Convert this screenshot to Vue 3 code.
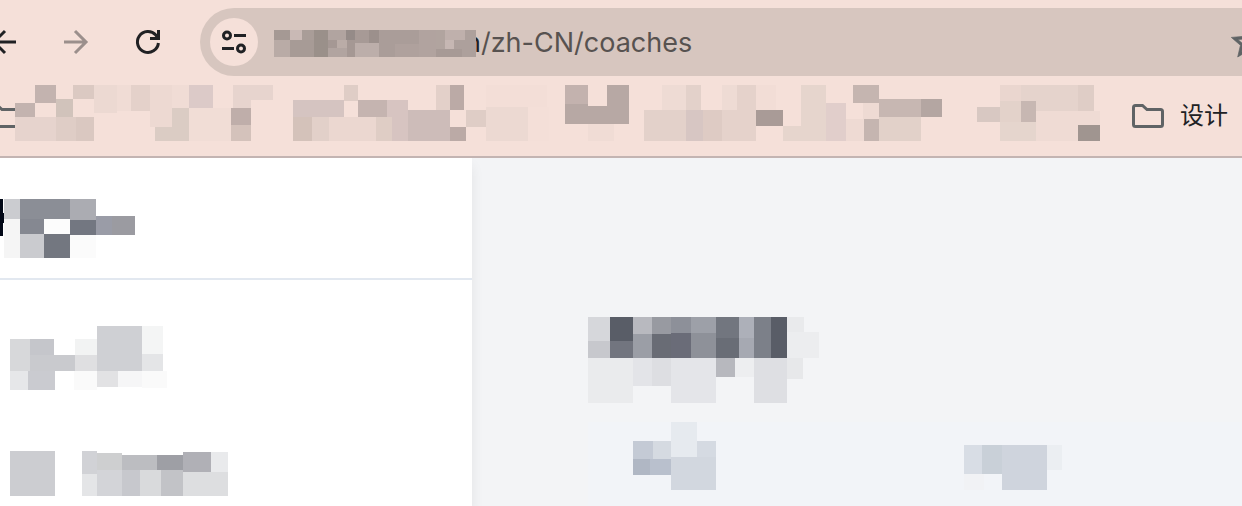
<script setup>
import { h } from 'vue'

// A block of redacted content: each cell is [x, y, width, height, colour].
const Mosaic = ({ w, t, cells }) =>
  h(
    'svg',
    { width: w, height: t, viewBox: `0 0 ${w} ${t}`, 'aria-hidden': 'true', 'shape-rendering': 'crispEdges' },
    cells.map(([x, y, width, height, fill]) => h('rect', { x, y, width, height, fill }))
  )
Mosaic.props = ['w', 't', 'cells']

const host = [
  [0, 0, 202, 27, '#ada09c'],
  [0, 0, 16, 10, '#a59994'], [16, 0, 12, 10, '#c9b9b5'], [28, 0, 12, 10, '#a99d98'],
  [0, 10, 16, 17, '#b9aba6'], [16, 10, 24, 17, '#a79b96'], [40, 0, 14, 27, '#9a908a'],
  [54, 0, 18, 10, '#b1a4a0'], [72, 0, 9, 10, '#958b88'], [81, 0, 14, 13, '#a79a96'],
  [95, 0, 10, 13, '#9c908c'], [54, 10, 9, 8, '#a59894'], [63, 10, 10, 8, '#baaca7'],
  [54, 18, 19, 9, '#b1a4a0'], [73, 10, 8, 17, '#a59894'], [81, 13, 24, 14, '#bcaeaa'],
  [105, 0, 40, 27, '#aa9d99'], [121, 14, 24, 13, '#afa19d'], [145, 0, 17, 27, '#b1a39f'],
  [162, 0, 9, 27, '#b1a49f'], [171, 0, 20, 10, '#bfb0ac'], [171, 10, 9, 9, '#c6b7b3'],
  [162, 19, 26, 8, '#a79a96']
]

const bookmarks = [
  [20, 0, 21, 18, '#c3b3af'], [0, 18, 20, 14, '#c3b3af'], [41, 14, 17, 18, '#d1c3bb'],
  [58, 0, 21, 14, '#dbc9c2'], [79, 0, 23, 28, '#ecd9d2'], [102, 0, 14, 26, '#f0dcd5'],
  [116, 0, 19, 26, '#e4d1ca'], [157, 0, 17, 23, '#f0dcd5'], [174, 0, 24, 23, '#dccac8'],
  [0, 32, 41, 24, '#e6d3cd'], [41, 32, 20, 24, '#dfcdc6'], [61, 32, 18, 24, '#dac8c1'],
  [140, 42, 34, 14, '#dbccc4'], [157, 23, 17, 33, '#dbccc4'], [135, 0, 22, 42, '#edd9d2'],
  [174, 23, 42, 33, '#f1ddd6'], [218, 0, 40, 15, '#e7d4ce'], [218, 15, 18, 8, '#e7d4ce'],
  [216, 23, 20, 17, '#bfaeaa'], [216, 40, 20, 16, '#d4c2bb'],
  [278, 15, 51, 17, '#d5c4c1'], [329, 0, 14, 16, '#dfcdc6'], [343, 15, 29, 17, '#c5b4b0'],
  [372, 15, 21, 41, '#d7c4c1'], [278, 32, 19, 24, '#d4c2ba'], [297, 32, 17, 24, '#e2d0c9'],
  [314, 32, 47, 24, '#ebd7d0'], [361, 32, 16, 24, '#dfcdc5'], [393, 25, 42, 31, '#cdbcb9'],
  [421, 0, 14, 25, '#e3d0c9'], [435, 0, 14, 25, '#bbaaa6'], [435, 42, 16, 14, '#bbaaa6'],
  [451, 25, 20, 17, '#dfcdc6'], [471, 0, 61, 22, '#f3ded7'], [471, 22, 42, 34, '#ecd9d2'],
  [513, 22, 21, 34, '#f4dfd8'], [550, 0, 23, 19, '#c3b2ae'], [592, 0, 22, 21, '#b7a8a4'],
  [550, 19, 23, 20, '#b7a8a4'], [573, 21, 41, 18, '#b7a8a4'], [573, 39, 26, 17, '#f0dcd5'],
  [647, 0, 24, 25, '#eedbd4'], [671, 0, 15, 25, '#e3d1ca'], [629, 25, 42, 31, '#e3d1ca'],
  [671, 25, 17, 31, '#d7c6c3'], [688, 25, 19, 31, '#decbc4'], [707, 0, 15, 25, '#eedbd4'],
  [722, 0, 19, 56, '#e5d2cb'], [707, 25, 15, 31, '#e5d2cb'], [741, 0, 20, 25, '#f2ddd6'],
  [741, 25, 27, 16, '#a99b97'], [768, 41, 18, 15, '#e6d5cd'], [786, 0, 25, 56, '#e6d5cd'],
  [811, 18, 20, 38, '#e1cecb'], [838, 0, 26, 18, '#c5b5b0'], [848, 18, 16, 16, '#eedad3'],
  [831, 34, 18, 22, '#eedad3'], [849, 34, 15, 22, '#c5b5b0'], [864, 14, 42, 18, '#c7b7b2'],
  [906, 14, 21, 18, '#b4a6a2'], [864, 32, 42, 24, '#e2d1c9'],
  [985, 0, 21, 16, '#ead6cf'], [1006, 0, 57, 26, '#e5d3cc'], [1063, 0, 16, 26, '#dfcdc6'],
  [962, 22, 23, 15, '#d8c8c2'], [985, 16, 21, 21, '#e3d2ca'], [1021, 26, 64, 30, '#efdbd4'],
  [1006, 16, 15, 21, '#c7b7b2'], [985, 37, 36, 19, '#e5d5cd'], [1063, 40, 22, 16, '#a09590']
]

const brand = [
  [0, 0, 3, 37, '#020817'], [3, 14, 1, 10, '#020817'],
  [4, 0, 16, 20, '#cbccd0'], [20, 0, 50, 20, '#8b8e96'], [70, 0, 26, 21, '#abacb2'],
  [4, 20, 16, 39, '#f5f5f5'], [20, 20, 24, 15, '#858891'], [44, 20, 26, 15, '#fcfcfc'],
  [70, 21, 26, 15, '#737781'], [96, 17, 16, 19, '#9a9ca7'], [112, 17, 23, 19, '#9b9ba1'],
  [20, 35, 24, 24, '#cacbcf'], [44, 35, 26, 24, '#737780'], [70, 36, 26, 23, '#fbfbfb']
]

const navFirst = [
  [0, 13, 20, 32, '#d7d8da'], [20, 13, 24, 16, '#c5c6cb'], [20, 29, 45, 16, '#c9cace'],
  [65, 13, 22, 16, '#f2f3f3'], [65, 29, 22, 16, '#dfdfe1'], [87, 0, 45, 45, '#cfd0d4'],
  [132, 0, 21, 28, '#f4f5f5'], [132, 28, 21, 17, '#e4e5e7'], [0, 45, 18, 19, '#e6e7e9'],
  [18, 45, 27, 19, '#cacbd0'], [64, 45, 23, 19, '#fafafa'], [87, 45, 21, 16, '#e2e2e4'],
  [108, 45, 24, 16, '#f6f6f7'], [132, 45, 25, 17, '#fafafa']
]

const navSecond = [
  [0, 0, 45, 45, '#cccdd1'], [72, 0, 15, 23, '#d1d2d6'], [87, 2, 25, 17, '#cecfd0'],
  [112, 4, 35, 15, '#bcbdc1'], [147, 4, 26, 15, '#9e9fa5'], [173, 1, 28, 20, '#b0b0b6'],
  [201, 1, 17, 20, '#e9eaec'], [72, 23, 15, 22, '#e4e5e7'], [87, 19, 25, 26, '#d3d4d8'],
  [112, 19, 18, 26, '#c7c8cd'], [130, 19, 21, 26, '#d9dadc'], [151, 19, 22, 26, '#c2c3c7'],
  [173, 21, 45, 24, '#dddee0']
]

const heading = [
  [0, 0, 22, 24, '#d6d7db'], [22, 0, 23, 24, '#595d67'], [45, 0, 19, 17, '#b8b9bf'],
  [64, 0, 19, 17, '#989aa1'], [83, 0, 20, 16, '#8d9099'], [103, 0, 25, 16, '#9da0a8'],
  [128, 0, 23, 21, '#72767f'], [151, 0, 15, 21, '#adb0b9'], [166, 0, 17, 41, '#7c8089'],
  [183, 0, 16, 41, '#595d67'], [199, 0, 17, 15, '#e9eaec'], [0, 24, 22, 17, '#c7c8cd'],
  [22, 24, 23, 17, '#72757f'], [45, 17, 19, 24, '#9b9ea6'], [64, 17, 19, 24, '#696c75'],
  [83, 16, 20, 25, '#6a6c78'], [103, 16, 25, 25, '#8e9199'], [128, 21, 23, 20, '#696d76'],
  [151, 21, 15, 20, '#a6a9b2'], [199, 15, 32, 26, '#ecedef'], [0, 41, 45, 45, '#eaebed'],
  [45, 41, 19, 28, '#e3e4e8'], [64, 41, 19, 28, '#dddee2'], [83, 41, 45, 45, '#e4e5e9'],
  [128, 41, 19, 19, '#b7b8be'], [147, 41, 19, 19, '#edeef0'], [166, 41, 33, 45, '#dedfe3'],
  [199, 41, 16, 21, '#e7e8ea']
]

const columnOne = [
  [38, 0, 26, 35, '#e6eaef'], [0, 19, 20, 18, '#c4cad5'], [20, 19, 18, 18, '#d5dae1'],
  [64, 19, 19, 16, '#d5dae2'], [0, 37, 17, 16, '#b0b7c4'], [17, 37, 21, 16, '#b9c0cd'],
  [38, 35, 45, 33, '#d2d7df']
]

const columnTwo = [
  [0, 0, 18, 29, '#d8dde5'], [18, 0, 20, 29, '#c9d0d8'], [38, 0, 45, 45, '#cfd4dd'],
  [83, 0, 15, 25, '#ebeef2'], [0, 29, 20, 16, '#f1f2f5']
]
</script>

<template>
  <div class="window">
    <header class="chrome">
      <div class="toolbar">
        <button class="tool" type="button" aria-label="Back">
          <svg width="32" height="32" viewBox="0 0 32 32" fill="none" stroke="#202124" stroke-width="3">
            <path d="M28 16H6M17 5L6 16L17 27" />
          </svg>
        </button>
        <button class="tool" type="button" aria-label="Forward" disabled>
          <svg width="32" height="32" viewBox="0 0 32 32" fill="none" stroke="#9b8f8c" stroke-width="3">
            <path d="M4 16H26M15 5L26 16L15 27" />
          </svg>
        </button>
        <button class="tool" type="button" aria-label="Reload">
          <svg width="32" height="32" viewBox="0 0 32 32" fill="none" stroke="#202124" stroke-width="3">
            <path d="M26.4 17A10.5 10.5 0 1 1 23.8 9L26 12" />
            <path d="M26.5 4V12.5H18" />
          </svg>
        </button>
        <div class="address">
          <button class="site" type="button" aria-label="Site information">
            <svg width="28" height="28" viewBox="0 0 28 28" fill="none" stroke="#202124" stroke-width="3">
              <circle cx="7" cy="7.5" r="3.5" />
              <path d="M14 7.5H26M2 20.5H14" />
              <circle cx="21" cy="20.5" r="3.5" />
            </svg>
          </button>
          <Mosaic class="host" :w="202" :t="27" :cells="host" />
          <span class="url"><span class="domain">n</span>/zh-CN/coaches</span>
          <button class="star" type="button" aria-label="Bookmark this page">
            <svg width="40" height="40" viewBox="0 0 24 24" fill="#5f6365" stroke="#5f6365" stroke-width="0.4">
              <path d="M22 9.24l-7.19-.62L12 2 9.19 8.63 2 9.24l5.46 4.73L5.82 21 12 17.27 18.18 21l-1.63-7.03L22 9.24zM12 15.4l-3.76 2.27 1-4.28-3.32-2.88 4.38-.38L12 6.1l1.71 4.04 4.38.38-3.32 2.88 1 4.28L12 15.4z" />
            </svg>
          </button>
        </div>
      </div>
      <nav class="bookmarks" aria-label="Bookmarks">
        <button class="bookmark first" type="button" aria-label="Folder">
          <svg width="32" height="24" viewBox="0 0 32 24" fill="none" stroke="#5f6365" stroke-width="3">
            <path d="M3.5 1.5H10.5L15 5.5H28.5Q30.5 5.5 30.5 7.5V20.5Q30.5 22.5 28.5 22.5H3.5Q1.5 22.5 1.5 20.5V3.5Q1.5 1.5 3.5 1.5Z" />
          </svg>
        </button>
        <Mosaic class="hidden-marks" :w="1085" :t="56" :cells="bookmarks" />
        <button class="bookmark" type="button">
          <svg width="32" height="24" viewBox="0 0 32 24" fill="none" stroke="#5f6365" stroke-width="3">
            <path d="M3.5 1.5H10.5L15 5.5H28.5Q30.5 5.5 30.5 7.5V20.5Q30.5 22.5 28.5 22.5H3.5Q1.5 22.5 1.5 20.5V3.5Q1.5 1.5 3.5 1.5Z" />
          </svg>
          <span>设计</span>
        </button>
      </nav>
    </header>
    <div class="page">
      <aside class="sidebar">
        <div class="brand"><Mosaic :w="135" :t="59" :cells="brand" /></div>
        <div class="menu">
          <Mosaic :w="157" :t="64" :cells="navFirst" />
          <Mosaic :w="218" :t="45" :cells="navSecond" />
        </div>
      </aside>
      <main class="content">
        <Mosaic :w="231" :t="86" :cells="heading" />
        <div class="columns">
          <Mosaic :w="83" :t="68" :cells="columnOne" />
          <Mosaic :w="98" :t="45" :cells="columnTwo" />
        </div>
      </main>
    </div>
  </div>
</template>

<style>
body {
  margin: 0;
}
</style>

<style scoped>
.window {
  display: flex;
  flex-direction: column;
  min-height: 100vh;
  overflow: hidden;
  font-family: Inter, "Noto Sans CJK SC", sans-serif;
}
svg {
  display: block;
  flex: none;
}
button {
  display: flex;
  align-items: center;
  flex: none;
  padding: 0;
  border: 0;
  background: none;
  font: inherit;
  color: inherit;
}
.chrome {
  background: #f5e0d9;
  border-bottom: 2px solid #c3b4b2;
}
.toolbar {
  display: flex;
  align-items: center;
  gap: 40px;
  padding-top: 8px;
  margin-left: -12px;
}
.address {
  display: flex;
  align-items: center;
  flex: 1;
  min-width: 0;
  height: 68px;
  padding-left: 10px;
  margin-left: -4px;
  margin-right: -80px;
  border-radius: 34px 0 0 34px;
  background: #d7c6bf;
}
.site {
  justify-content: center;
  width: 48px;
  height: 48px;
  border-radius: 50%;
  background: #f5e0d9;
}
.host {
  position: relative;
  margin: 2px 0 0 16px;
}
.url {
  flex: 1;
  margin-left: -11px;
  padding-top: 2px;
  font-size: 27px;
  line-height: 36px;
  color: #575250;
}
.domain {
  color: #202124;
}
.star {
  margin-right: 54px;
}
.bookmarks {
  display: flex;
  align-items: center;
  height: 56px;
  padding: 9px 0 15px;
}
.bookmark {
  gap: 16px;
  margin: 6px 0 0 32px;
  font-size: 24px;
  line-height: 32px;
  color: #202124;
  white-space: nowrap;
}
.bookmark.first {
  margin-left: -13px;
}
.hidden-marks {
  position: relative;
  margin-left: -4px;
}
.page {
  display: flex;
  flex: 1;
  background: #f3f4f6;
}
.sidebar {
  flex: none;
  width: 38%;
  background: #fff;
  box-shadow: 0 8px 12px rgba(0, 0, 0, 0.07);
  clip-path: inset(0 -20px 0 0);
}
.brand {
  padding: 41px 0 20px;
  border-bottom: 2px solid #e2e8f0;
}
.menu {
  display: flex;
  flex-direction: column;
  gap: 61px;
  padding: 46px 10px 10px;
}
.content {
  flex: 1;
  min-width: 0;
  padding: 159px 0 0 116px;
}
.columns {
  display: grid;
  grid-template-columns: 331px 1fr;
  align-items: end;
  margin-top: 19px;
  padding: 0 0 16px 45px;
  background: #f2f4f8;
}
</style>
